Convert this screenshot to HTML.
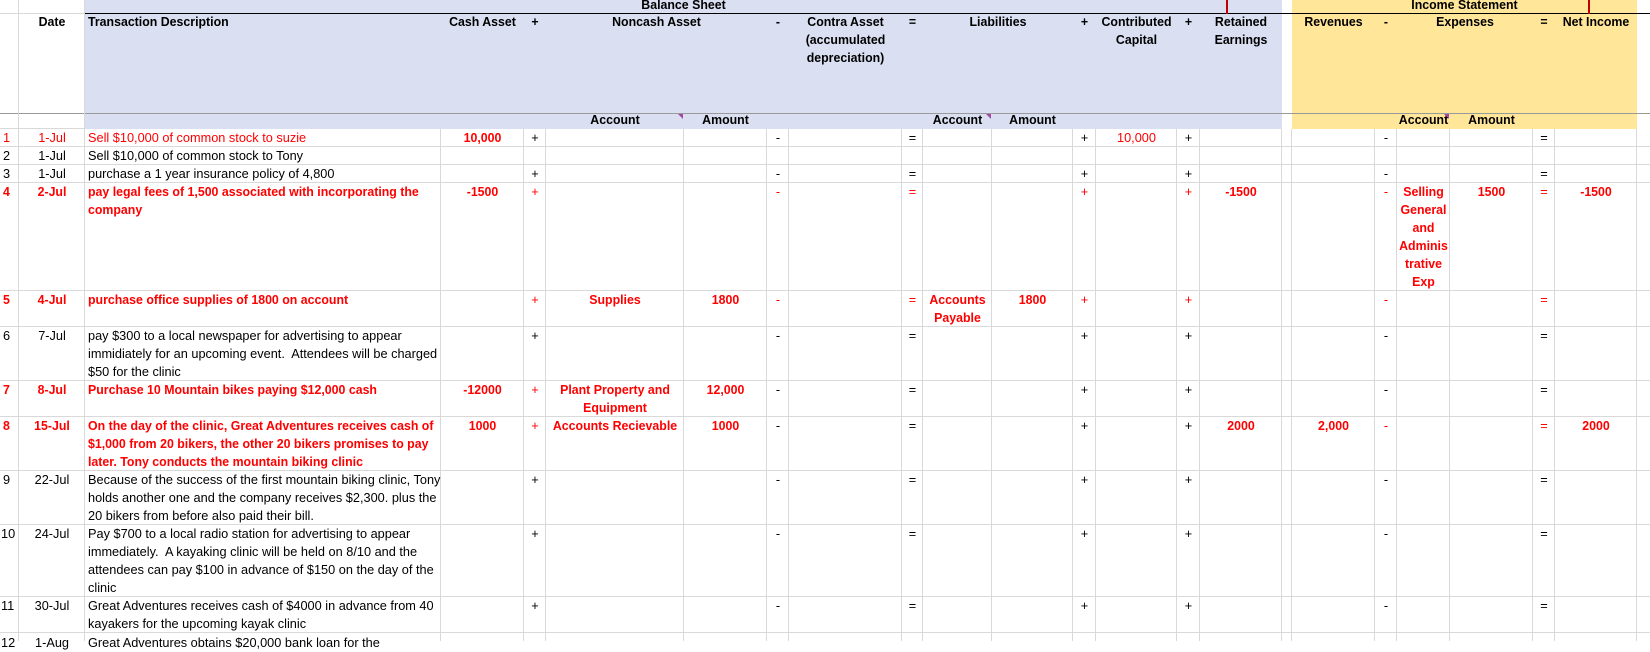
<!DOCTYPE html>
<html><head><meta charset="utf-8">
<style>
html,body{margin:0;padding:0;}
body{width:1650px;height:641px;overflow:hidden;position:relative;background:#fff;font-family:"Liberation Sans",Arial,sans-serif;font-size:13px;color:#000;}
.bg{position:absolute;}
.v{position:absolute;width:1px;background:#d9d9d9;}
.h{position:absolute;height:1px;background:#d9d9d9;}
.t{position:absolute;line-height:18px;white-space:nowrap;transform:scaleX(.98);}
.t.b{transform:scaleX(.95);}
.c{text-align:center;transform-origin:center top;}
.l{text-align:left;transform-origin:left top;}
.b{font-weight:bold;}
.r{color:#ff0000;}
.tri{position:absolute;width:0;height:0;border-top:5px solid #a349a4;border-left:5px solid transparent;}
</style></head><body>
<div class="bg" style="left:85px;top:0;width:1197px;height:129px;background:#dae0f2"></div>
<div class="bg" style="left:1292px;top:0;width:345px;height:129px;background:#ffe699"></div>
<div class="bg" style="left:85px;top:13px;width:1565px;height:1px;background:#000"></div>
<div class="bg" style="left:0;top:13px;width:85px;height:1px;background:#d9d9d9"></div>
<div class="bg" style="left:0;top:113px;width:1650px;height:1px;background:#9a9a9a"></div>
<div class="bg" style="left:1226px;top:0;width:2px;height:14px;background:#c00000"></div>
<div class="bg" style="left:1588px;top:0;width:2px;height:14px;background:#c00000"></div>
<div class="v" style="left:18px;top:0;height:641px"></div>
<div class="v" style="left:84px;top:0;height:641px"></div>
<div class="v" style="left:440px;top:129px;height:512px"></div>
<div class="v" style="left:523px;top:129px;height:512px"></div>
<div class="v" style="left:545px;top:129px;height:512px"></div>
<div class="v" style="left:683px;top:129px;height:512px"></div>
<div class="v" style="left:766px;top:129px;height:512px"></div>
<div class="v" style="left:788px;top:129px;height:512px"></div>
<div class="v" style="left:901px;top:129px;height:512px"></div>
<div class="v" style="left:922px;top:129px;height:512px"></div>
<div class="v" style="left:991px;top:129px;height:512px"></div>
<div class="v" style="left:1072px;top:129px;height:512px"></div>
<div class="v" style="left:1095px;top:129px;height:512px"></div>
<div class="v" style="left:1176px;top:129px;height:512px"></div>
<div class="v" style="left:1199px;top:129px;height:512px"></div>
<div class="v" style="left:1281px;top:129px;height:512px"></div>
<div class="v" style="left:1291px;top:129px;height:512px"></div>
<div class="v" style="left:1374px;top:129px;height:512px"></div>
<div class="v" style="left:1396px;top:129px;height:512px"></div>
<div class="v" style="left:1449px;top:129px;height:512px"></div>
<div class="v" style="left:1532px;top:129px;height:512px"></div>
<div class="v" style="left:1554px;top:129px;height:512px"></div>
<div class="v" style="left:1636px;top:129px;height:512px"></div>
<div class="h" style="left:0;top:128px;width:85px"></div>
<div class="h" style="left:0;top:146px;width:1650px"></div>
<div class="h" style="left:0;top:164px;width:1650px"></div>
<div class="h" style="left:0;top:182px;width:1650px"></div>
<div class="h" style="left:0;top:290px;width:1650px"></div>
<div class="h" style="left:0;top:326px;width:1650px"></div>
<div class="h" style="left:0;top:380px;width:1650px"></div>
<div class="h" style="left:0;top:416px;width:1650px"></div>
<div class="h" style="left:0;top:470px;width:1650px"></div>
<div class="h" style="left:0;top:524px;width:1650px"></div>
<div class="h" style="left:0;top:596px;width:1650px"></div>
<div class="h" style="left:0;top:632px;width:1650px"></div>

<div class="t c b" style="left:85px;top:-4px;width:1197px">Balance Sheet</div>
<div class="t c b" style="left:1292px;top:-4px;width:345px">Income Statement</div>
<div class="t c b" style="left:19px;top:13px;width:66px">Date</div>
<div class="t l b" style="left:88px;top:13px">Transaction Description</div>
<div class="t c b" style="left:441px;top:13px;width:83px">Cash Asset</div>
<div class="t c b" style="left:524px;top:13px;width:22px">+</div>
<div class="t c b" style="left:546px;top:13px;width:221px">Noncash Asset</div>
<div class="t c b" style="left:767px;top:13px;width:22px">-</div>
<div class="t c b" style="left:789px;top:13px;width:113px">Contra Asset<br>(accumulated<br>depreciation)</div>
<div class="t c b" style="left:902px;top:13px;width:21px">=</div>
<div class="t c b" style="left:923px;top:13px;width:150px">Liabilities</div>
<div class="t c b" style="left:1073px;top:13px;width:23px">+</div>
<div class="t c b" style="left:1096px;top:13px;width:81px">Contributed<br>Capital</div>
<div class="t c b" style="left:1177px;top:13px;width:23px">+</div>
<div class="t c b" style="left:1200px;top:13px;width:82px">Retained<br>Earnings</div>
<div class="t c b" style="left:1292px;top:13px;width:83px">Revenues</div>
<div class="t c b" style="left:1375px;top:13px;width:22px">-</div>
<div class="t c b" style="left:1397px;top:13px;width:136px">Expenses</div>
<div class="t c b" style="left:1533px;top:13px;width:22px">=</div>
<div class="t c b" style="left:1555px;top:13px;width:82px">Net Income</div>
<div class="t c b" style="left:546px;top:111px;width:138px">Account</div>
<div class="t c b" style="left:684px;top:111px;width:83px">Amount</div>
<div class="t c b" style="left:923px;top:111px;width:69px">Account</div>
<div class="t c b" style="left:992px;top:111px;width:81px">Amount</div>
<div class="t c b" style="left:1387px;top:111px;width:73px">Account</div>
<div class="t c b" style="left:1450px;top:111px;width:83px">Amount</div>
<div class="tri" style="left:678px;top:114px"></div>
<div class="tri" style="left:986px;top:114px"></div>
<div class="tri" style="left:1444px;top:114px"></div>

<div class="t l r" style="left:3px;top:129px">1</div>
<div class="t c r" style="left:19px;top:129px;width:66px">1-Jul</div>
<div class="t l r" style="left:88px;top:129px">Sell $10,000 of common stock to suzie</div>
<div class="t c r b" style="left:441px;top:129px;width:83px">10,000</div>
<div class="t c" style="left:524px;top:129px;width:22px">+</div>
<div class="t c" style="left:767px;top:129px;width:22px">-</div>
<div class="t c" style="left:902px;top:129px;width:21px">=</div>
<div class="t c" style="left:1073px;top:129px;width:23px">+</div>
<div class="t c r" style="left:1096px;top:129px;width:81px">10,000</div>
<div class="t c" style="left:1177px;top:129px;width:23px">+</div>
<div class="t c" style="left:1375px;top:129px;width:22px">-</div>
<div class="t c" style="left:1533px;top:129px;width:22px">=</div>
<div class="t l" style="left:3px;top:147px">2</div>
<div class="t c" style="left:19px;top:147px;width:66px">1-Jul</div>
<div class="t l" style="left:88px;top:147px">Sell $10,000 of common stock to Tony</div>
<div class="t l" style="left:3px;top:165px">3</div>
<div class="t c" style="left:19px;top:165px;width:66px">1-Jul</div>
<div class="t l" style="left:88px;top:165px">purchase a 1 year insurance policy of 4,800</div>
<div class="t c" style="left:524px;top:165px;width:22px">+</div>
<div class="t c" style="left:767px;top:165px;width:22px">-</div>
<div class="t c" style="left:902px;top:165px;width:21px">=</div>
<div class="t c" style="left:1073px;top:165px;width:23px">+</div>
<div class="t c" style="left:1177px;top:165px;width:23px">+</div>
<div class="t c" style="left:1375px;top:165px;width:22px">-</div>
<div class="t c" style="left:1533px;top:165px;width:22px">=</div>
<div class="t l r b" style="left:3px;top:183px">4</div>
<div class="t c r b" style="left:19px;top:183px;width:66px">2-Jul</div>
<div class="t l r b" style="left:88px;top:183px">pay legal fees of 1,500 associated with incorporating the<br>company</div>
<div class="t c r b" style="left:441px;top:183px;width:83px">-1500</div>
<div class="t c r" style="left:524px;top:183px;width:22px">+</div>
<div class="t c r" style="left:767px;top:183px;width:22px">-</div>
<div class="t c r" style="left:902px;top:183px;width:21px">=</div>
<div class="t c r" style="left:1073px;top:183px;width:23px">+</div>
<div class="t c r" style="left:1177px;top:183px;width:23px">+</div>
<div class="t c r b" style="left:1200px;top:183px;width:82px">-1500</div>
<div class="t c r" style="left:1375px;top:183px;width:22px">-</div>
<div class="t c r b" style="left:1397px;top:183px;width:53px">Selling<br>General<br>and<br>Adminis<br>trative<br>Exp</div>
<div class="t c r b" style="left:1450px;top:183px;width:83px">1500</div>
<div class="t c r" style="left:1533px;top:183px;width:22px">=</div>
<div class="t c r b" style="left:1555px;top:183px;width:82px">-1500</div>
<div class="t l r b" style="left:3px;top:291px">5</div>
<div class="t c r b" style="left:19px;top:291px;width:66px">4-Jul</div>
<div class="t l r b" style="left:88px;top:291px">purchase office supplies of 1800 on account</div>
<div class="t c r" style="left:524px;top:291px;width:22px">+</div>
<div class="t c r b" style="left:546px;top:291px;width:138px">Supplies</div>
<div class="t c r b" style="left:684px;top:291px;width:83px">1800</div>
<div class="t c r" style="left:767px;top:291px;width:22px">-</div>
<div class="t c r" style="left:902px;top:291px;width:21px">=</div>
<div class="t c r b" style="left:923px;top:291px;width:69px">Accounts<br>Payable</div>
<div class="t c r b" style="left:992px;top:291px;width:81px">1800</div>
<div class="t c r" style="left:1073px;top:291px;width:23px">+</div>
<div class="t c r" style="left:1177px;top:291px;width:23px">+</div>
<div class="t c r" style="left:1375px;top:291px;width:22px">-</div>
<div class="t c r" style="left:1533px;top:291px;width:22px">=</div>
<div class="t l" style="left:3px;top:327px">6</div>
<div class="t c" style="left:19px;top:327px;width:66px">7-Jul</div>
<div class="t l" style="left:88px;top:327px">pay $300 to a local newspaper for advertising to appear<br>immidiately for an upcoming event.&nbsp; Attendees will be charged<br>$50 for the clinic</div>
<div class="t c" style="left:524px;top:327px;width:22px">+</div>
<div class="t c" style="left:767px;top:327px;width:22px">-</div>
<div class="t c" style="left:902px;top:327px;width:21px">=</div>
<div class="t c" style="left:1073px;top:327px;width:23px">+</div>
<div class="t c" style="left:1177px;top:327px;width:23px">+</div>
<div class="t c" style="left:1375px;top:327px;width:22px">-</div>
<div class="t c" style="left:1533px;top:327px;width:22px">=</div>
<div class="t l r b" style="left:3px;top:381px">7</div>
<div class="t c r b" style="left:19px;top:381px;width:66px">8-Jul</div>
<div class="t l r b" style="left:88px;top:381px">Purchase 10 Mountain bikes paying $12,000 cash</div>
<div class="t c r b" style="left:441px;top:381px;width:83px">-12000</div>
<div class="t c r" style="left:524px;top:381px;width:22px">+</div>
<div class="t c r b" style="left:546px;top:381px;width:138px">Plant Property and<br>Equipment</div>
<div class="t c r b" style="left:684px;top:381px;width:83px">12,000</div>
<div class="t c" style="left:767px;top:381px;width:22px">-</div>
<div class="t c" style="left:902px;top:381px;width:21px">=</div>
<div class="t c" style="left:1073px;top:381px;width:23px">+</div>
<div class="t c" style="left:1177px;top:381px;width:23px">+</div>
<div class="t c" style="left:1375px;top:381px;width:22px">-</div>
<div class="t c" style="left:1533px;top:381px;width:22px">=</div>
<div class="t l r b" style="left:3px;top:417px">8</div>
<div class="t c r b" style="left:19px;top:417px;width:66px">15-Jul</div>
<div class="t l r b" style="left:88px;top:417px">On the day of the clinic, Great Adventures receives cash of<br>$1,000 from 20 bikers, the other 20 bikers promises to pay<br>later. Tony conducts the mountain biking clinic</div>
<div class="t c r b" style="left:441px;top:417px;width:83px">1000</div>
<div class="t c r" style="left:524px;top:417px;width:22px">+</div>
<div class="t c r b" style="left:546px;top:417px;width:138px">Accounts Recievable</div>
<div class="t c r b" style="left:684px;top:417px;width:83px">1000</div>
<div class="t c" style="left:767px;top:417px;width:22px">-</div>
<div class="t c" style="left:902px;top:417px;width:21px">=</div>
<div class="t c" style="left:1073px;top:417px;width:23px">+</div>
<div class="t c" style="left:1177px;top:417px;width:23px">+</div>
<div class="t c r b" style="left:1200px;top:417px;width:82px">2000</div>
<div class="t c r b" style="left:1292px;top:417px;width:83px">2,000</div>
<div class="t c r" style="left:1375px;top:417px;width:22px">-</div>
<div class="t c r" style="left:1533px;top:417px;width:22px">=</div>
<div class="t c r b" style="left:1555px;top:417px;width:82px">2000</div>
<div class="t l" style="left:3px;top:471px">9</div>
<div class="t c" style="left:19px;top:471px;width:66px">22-Jul</div>
<div class="t l" style="left:88px;top:471px">Because of the success of the first mountain biking clinic, Tony<br>holds another one and the company receives $2,300. plus the<br>20 bikers from before also paid their bill.</div>
<div class="t c" style="left:524px;top:471px;width:22px">+</div>
<div class="t c" style="left:767px;top:471px;width:22px">-</div>
<div class="t c" style="left:902px;top:471px;width:21px">=</div>
<div class="t c" style="left:1073px;top:471px;width:23px">+</div>
<div class="t c" style="left:1177px;top:471px;width:23px">+</div>
<div class="t c" style="left:1375px;top:471px;width:22px">-</div>
<div class="t c" style="left:1533px;top:471px;width:22px">=</div>
<div class="t l" style="left:1px;top:525px">10</div>
<div class="t c" style="left:19px;top:525px;width:66px">24-Jul</div>
<div class="t l" style="left:88px;top:525px">Pay $700 to a local radio station for advertising to appear<br>immediately.&nbsp; A kayaking clinic will be held on 8/10 and the<br>attendees can pay $100 in advance of $150 on the day of the<br>clinic</div>
<div class="t c" style="left:524px;top:525px;width:22px">+</div>
<div class="t c" style="left:767px;top:525px;width:22px">-</div>
<div class="t c" style="left:902px;top:525px;width:21px">=</div>
<div class="t c" style="left:1073px;top:525px;width:23px">+</div>
<div class="t c" style="left:1177px;top:525px;width:23px">+</div>
<div class="t c" style="left:1375px;top:525px;width:22px">-</div>
<div class="t c" style="left:1533px;top:525px;width:22px">=</div>
<div class="t l" style="left:1px;top:597px">11</div>
<div class="t c" style="left:19px;top:597px;width:66px">30-Jul</div>
<div class="t l" style="left:88px;top:597px">Great Adventures receives cash of $4000 in advance from 40<br>kayakers for the upcoming kayak clinic</div>
<div class="t c" style="left:524px;top:597px;width:22px">+</div>
<div class="t c" style="left:767px;top:597px;width:22px">-</div>
<div class="t c" style="left:902px;top:597px;width:21px">=</div>
<div class="t c" style="left:1073px;top:597px;width:23px">+</div>
<div class="t c" style="left:1177px;top:597px;width:23px">+</div>
<div class="t c" style="left:1375px;top:597px;width:22px">-</div>
<div class="t c" style="left:1533px;top:597px;width:22px">=</div>
<div class="t l" style="left:1px;top:634px">12</div>
<div class="t c" style="left:19px;top:634px;width:66px">1-Aug</div>
<div class="t l" style="left:88px;top:634px">Great Adventures obtains $20,000 bank loan for the</div>
</body></html>
